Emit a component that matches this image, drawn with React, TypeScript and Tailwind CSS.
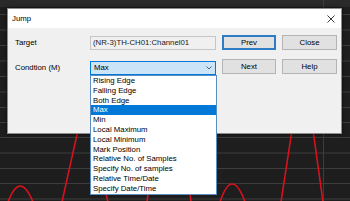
import React from "react";

const items = [
  "Rising Edge",
  "Falling Edge",
  "Both Edge",
  "Max",
  "Min",
  "Local Maximum",
  "Local Minimum",
  "Mark Position",
  "Relative No. of Samples",
  "Specify No. of samples",
  "Relative Time/Date",
  "Specify Date/Time",
];

const gridY = [14.5, 30, 45.5, 61, 76.5, 92, 107.5, 122.5, 137.5, 153, 168.5, 183.5, 199];

function Chart() {
  return (
    <svg className="absolute inset-0" width="350" height="201" viewBox="0 0 350 201">
      <rect x="0" y="0" width="350" height="201" fill="#1e1e1e" />
      <rect x="0" y="0" width="350" height="7" fill="#2a2a2a" />
      {gridY.map((y) => (
        <line key={y} x1="0" x2="350" y1={y} y2={y} stroke="#3d3d3d" strokeWidth="1" />
      ))}
      <line x1="323.5" x2="323.5" y1="0" y2="201" stroke="#3d3d3d" strokeWidth="1" />
      <g fill="none" stroke="#d8121c" strokeWidth="1.6" strokeLinecap="round">
        <path d="M 8 202 Q 20 170 33 202" />
        <path d="M 62 202 L 78 130" />
        <path d="M 106 194 L 108 202" />
        <path d="M 148 194 L 147 202" />
        <path d="M 190 193 L 191 202" />
        <path d="M 220 202 Q 232 166 245 202" />
        <path d="M 281 202 L 292 130" />
        <path d="M 313 130 L 323 202" />
      </g>
    </svg>
  );
}

function Button({ label, focused = false, w }: { label: string; focused?: boolean; w: string }) {
  return (
    <div
      className={
        focused
          ? `${w} h-[15px] flex items-center justify-center bg-[#e1e1e1] border-2 border-[#2d7cc4] text-[7.8px] text-black`
          : `${w} h-[15px] flex items-center justify-center bg-[#e1e1e1] border border-[#b4b4b4] text-[7.8px] text-black`
      }
    >
      {label}
    </div>
  );
}

export default function App() {
  return (
    <div className="relative w-[350px] h-[201px] overflow-hidden bg-[#1e1e1e] font-['Liberation_Sans',Arial,sans-serif]">
      <Chart />
      <div className="absolute left-[7px] top-[8px] w-[335px] h-[126px] flex flex-col bg-[#f0f0f0] border border-[#8c8c8c] shadow-[0_0_4px_rgba(0,0,0,0.6)]">
        <div className="h-[19px] bg-white flex items-center justify-between pl-[4px] pr-[6px]">
          <span className="text-[7.8px] text-black">Jump</span>
          <svg width="8" height="8" viewBox="0 0 8 8">
            <path d="M0.5 0.5 L7.5 7.5 M7.5 0.5 L0.5 7.5" stroke="#222" strokeWidth="0.9" fill="none" />
          </svg>
        </div>
        <div className="flex flex-col pl-[7px] pt-[7px]">
          <div className="flex items-center h-[15px]">
            <span className="w-[75px] text-[7.8px] text-black">Target</span>
            <div className="w-[126px] h-[14px] flex items-center pl-[2px] bg-[#f0f0f0] border border-[#c6c6c6] text-[7.8px] text-[#1a1a1a]">
              (NR-3)TH-CH01:Channel01
            </div>
            <div className="ml-[6px]">
              <Button label="Prev" focused w="w-[54px]" />
            </div>
            <div className="ml-[6px]">
              <Button label="Close" w="w-[55px]" />
            </div>
          </div>
          <div className="flex h-[16px] mt-[9px]">
            <span className="w-[75px] self-end h-[14px] flex items-center text-[7.8px] text-black">Condtion (M)</span>
            <div className="relative self-end w-[126px] h-[14px] flex items-center justify-between pl-[3px] pr-[3px] bg-[#cce4f7] border border-[#0078d7] text-[7.8px] text-black">
              <span>Max</span>
              <svg width="6" height="4" viewBox="0 0 6 4">
                <path d="M0.5 0.5 L3 3 L5.5 0.5" stroke="#555" strokeWidth="0.9" fill="none" />
              </svg>
              <div className="absolute left-[-1px] top-[13px] w-[127px] flex flex-col bg-white border border-[#5b8ec4] z-10">
                {items.map((it) => (
                  <div
                    key={it}
                    className={
                      it === "Max"
                        ? "h-[9.8px] leading-[9.8px] pl-[2px] text-[7.8px] whitespace-nowrap bg-[#0078d7] text-white"
                        : "h-[9.8px] leading-[9.8px] pl-[2px] text-[7.8px] whitespace-nowrap text-black"
                    }
                  >
                    {it}
                  </div>
                ))}
              </div>
            </div>
            <div className="ml-[6px] self-start">
              <Button label="Next" w="w-[54px]" />
            </div>
            <div className="ml-[6px] self-start">
              <Button label="Help" w="w-[55px]" />
            </div>
          </div>
        </div>
      </div>
    </div>
  );
}
